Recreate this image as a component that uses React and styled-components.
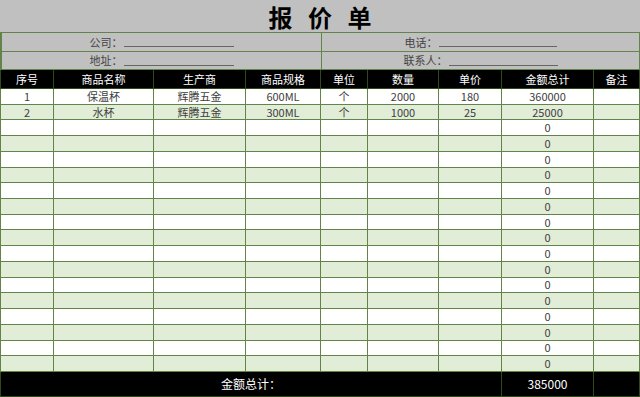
import React from 'react'
import styled, { createGlobalStyle } from 'styled-components'

const GREEN = '#62834a'
const DARK_GREEN = '#2f4a1a'

const GlobalStyle = createGlobalStyle`
  * { box-sizing: border-box; }
  body {
    margin: 0;
    font-family: "Noto Sans CJK SC", "Noto Sans", sans-serif;
    background: #fff;
  }
`

const COLS = '53px 100px 92px 75px 47px 71px 63px 92px 1fr'

const Sheet = styled.div`
  width: 640px;
  height: 397px;
  display: flex;
  flex-direction: column;
  overflow: hidden;
`

const TitleBar = styled.div`
  height: 33px;
  flex: none;
  background: #c0c0c0;
  border-bottom: 1px solid ${GREEN};
  display: flex;
  align-items: center;
  justify-content: center;
  font-size: 24px;
  font-weight: 700;
  color: #000;
  letter-spacing: 5px;
  padding-left: 5px;
`

const InfoRow = styled.div`
  height: 18.5px;
  flex: none;
  display: grid;
  grid-template-columns: 320px 1fr;
  background: #c0c0c0;
  border-left: 2px solid ${GREEN};
  border-bottom: 1px solid ${GREEN};
`

const InfoCell = styled.div`
  display: flex;
  align-items: center;
  justify-content: center;
  font-size: 11px;
  color: #444;
  border-right: 1px solid ${GREEN};
`

const Blank = styled.span`
  display: inline-block;
  width: ${p => p.$w}px;
  height: 11px;
  border-bottom: 1px solid #666;
  margin-left: 1px;
`

const Row = styled.div`
  display: grid;
  grid-template-columns: ${COLS};
  flex: ${p => (p.$fixed ? 'none' : '1')};
  height: ${p => (p.$fixed ? `${p.$fixed}px` : 'auto')};
  background: ${p => (p.$dark ? '#000' : p.$alt ? '#e1edd7' : '#fff')};
  border-left: 1px solid ${p => (p.$dark ? DARK_GREEN : GREEN)};
`

const Cell = styled.div`
  display: flex;
  align-items: center;
  justify-content: center;
  font-size: ${p => (p.$big ? 12 : 11)}px;
  line-height: 1;
  color: ${p => (p.$light ? '#fff' : '#404040')};
  border-right: 1px solid ${p => (p.$light ? DARK_GREEN : GREEN)};
  border-bottom: 1px solid ${p => (p.$light ? DARK_GREEN : GREEN)};
  grid-column: ${p => (p.$span ? `span ${p.$span}` : 'auto')};
  overflow: hidden;
  white-space: nowrap;
`

const Body = styled.div`
  height: 283px;
  flex: none;
  display: flex;
  flex-direction: column;
`

const heads = ['序号', '商品名称', '生产商', '商品规格', '单位', '数量', '单价', '金额总计', '备注']

const items = [
  ['1', '保温杯', '辉腾五金', '600ML', '个', '2000', '180', '360000', ''],
  ['2', '水杯', '辉腾五金', '300ML', '个', '1000', '25', '25000', ''],
]

const rows = [...items]
while (rows.length < 18) rows.push(['', '', '', '', '', '', '', '0', ''])

const total = items.reduce((sum, it) => sum + Number(it[7]), 0)

export default function App() {
  return (
    <>
      <GlobalStyle />
      <Sheet>
        <TitleBar>报 价 单</TitleBar>
        <InfoRow>
          <InfoCell>公司：<Blank $w={110} /></InfoCell>
          <InfoCell>电话：<Blank $w={118} /></InfoCell>
        </InfoRow>
        <InfoRow>
          <InfoCell>地址：<Blank $w={110} /></InfoCell>
          <InfoCell>联系人：<Blank $w={109} /></InfoCell>
        </InfoRow>
        <Row $dark $fixed={19}>
          {heads.map(h => <Cell key={h} $light>{h}</Cell>)}
        </Row>
        <Body>
          {rows.map((r, i) => (
            <Row key={i} $alt={i % 2 === 1}>
              {r.map((v, j) => <Cell key={j}>{v}</Cell>)}
            </Row>
          ))}
        </Body>
        <Row $dark $fixed={25}>
          <Cell $light $big $span={7}>金额总计：</Cell>
          <Cell $light $big>{total}</Cell>
          <Cell $light />
        </Row>
      </Sheet>
    </>
  )
}
